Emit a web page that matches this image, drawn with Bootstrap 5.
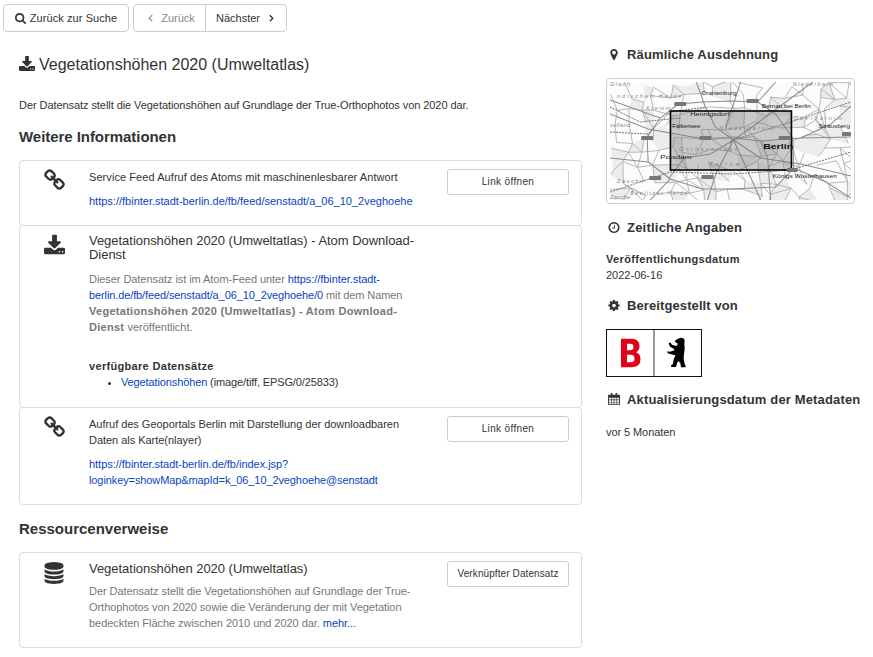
<!DOCTYPE html>
<html lang="de">
<head>
<meta charset="utf-8">
<meta name="viewport" content="width=device-width, initial-scale=1">
<title>Vegetationshöhen 2020 (Umweltatlas)</title>
<link href="https://cdn.jsdelivr.net/npm/bootstrap@5.3.0/dist/css/bootstrap.min.css" rel="stylesheet">
<style>
body{font:11px/16px "Liberation Sans",Arial,sans-serif;color:#333;background:#fff;overflow:hidden}
a{color:#0a44c0;text-decoration:none}
svg{fill:currentColor;flex:none}
.page{width:873px;height:657px}
.tools{padding:4px 0 0 3px;height:32px;gap:4px}
.tools .btn{--bs-btn-font-size:11px;--bs-btn-line-height:16px;--bs-btn-padding-y:5px;--bs-btn-padding-x:0;--bs-btn-border-radius:4px}
.btn-line{--bs-btn-color:#333;--bs-btn-bg:#fff;--bs-btn-border-color:#ccc;--bs-btn-disabled-color:#888;--bs-btn-disabled-border-color:#ccc;--bs-btn-disabled-opacity:1;white-space:nowrap}
.b-search{width:126px}
.tools .b-prev{width:73px;padding-left:4px}
.tools .b-next{width:82px;padding-right:2px}
.b-next svg{margin-left:9px}
.main-col{width:563px;margin-left:19px}
.side-col{width:260px;margin-left:24px}
.page-title{font-size:16px;line-height:20px;margin:23px 0 0;font-weight:400}
.page-title svg{margin-top:1px}
.intro{margin-top:22px;white-space:nowrap}
.sect{font-size:15px;line-height:18px;font-weight:700}
.s1{margin:15px 0 14px}
.s2{margin:15px 0 14px}
.entry{border:1px solid #ddd;border-radius:4px;padding:8px 12px 0 0}
.entry + .entry{margin-top:-1px}
.e1{height:66px}
.e2{height:183px}
.e3{height:98px}
.e4{height:96px}
.pic{width:69px;padding-left:24px}
.e4 .pic{padding-top:1px}
.body-text{width:358px;white-space:nowrap}
.entry .btn{width:122px;height:26px;--bs-btn-font-size:10px;--bs-btn-line-height:14px;--bs-btn-padding-y:4px;--bs-btn-padding-x:0;--bs-btn-border-radius:3px;letter-spacing:.35px}
.entry .b-long{letter-spacing:.1px}
.sub{font-size:13px;line-height:14px;font-weight:400;margin:0}
.e4 .sub{margin-top:1px}
.muted{color:#777}
.desc{margin-top:9px}
.e4 .desc{margin-top:7px}
.avail{margin-top:23px}
.ds{padding-left:32px;margin:0}
.side-h{font-size:13px;line-height:16px;font-weight:700;margin:15px 0;gap:5px;white-space:nowrap}
.side-h svg{width:16px;margin-top:1px}
.thumb{width:249px;height:126px;border:1px solid #ccc;border-radius:4px;padding:3px;margin-bottom:16px}
.thumb svg,.logo{display:block}
.t-search{letter-spacing:.08px}
.t-intro{letter-spacing:-.067px}
.t-s1{letter-spacing:-.05px}
.t-a1{letter-spacing:.07px}
.t-b1{letter-spacing:-.03px}
.t-b2,.t-d1{letter-spacing:-.06px}
.t-b3{letter-spacing:-.11px}
.t-b4{letter-spacing:.28px}
.t-b6{letter-spacing:.32px}
.t-b7{letter-spacing:-.12px}
.t-c1,.t-c3{letter-spacing:-.03px}
.t-c4{letter-spacing:-.1px}
.t-d2,.t-d3{letter-spacing:-.05px}
.t-e1,.t-e5{letter-spacing:.15px}
.t-e2{letter-spacing:.22px}
.t-e3{letter-spacing:.36px}
.t-e4{letter-spacing:.1px}
.t-e6{letter-spacing:-.08px}
</style>
<script src="https://cdn.jsdelivr.net/npm/bootstrap@5.3.0/dist/js/bootstrap.bundle.min.js"></script>
</head>
<body>
<svg class="d-none" xmlns="http://www.w3.org/2000/svg">
<symbol id="i-search" viewBox="0 0 1664 1664"><path d="M1152 704q0-185-131.500-316.500t-316.500-131.500-316.500 131.500-131.500 316.500 131.500 316.500 316.500 131.500 316.500-131.500 131.500-316.500zm512 832q0 52-38 90t-90 38q-54 0-90-38l-343-342q-179 124-399 124-143 0-273.500-55.500t-225-150-150-225-55.500-273.500 55.500-273.500 150-225 225-150 273.500-55.500 273.500 55.500 225 150 150 225 55.500 273.500q0 220-124 399l343 343q37 37 37 90z"/></symbol>
<symbol id="i-down" viewBox="64 0 1664 1536"><path d="M1344 1344q0-26-19-45t-45-19-45 19-19 45 19 45 45 19 45-19 19-45zm256 0q0-26-19-45t-45-19-45 19-19 45 19 45 45 19 45-19 19-45zm128-224v320q0 40-28 68t-68 28h-1472q-40 0-68-28t-28-68v-320q0-40 28-68t68-28h465l135 136q58 56 136 56t136-56l136-136h464q40 0 68 28t28 68zm-325-569q17 41-14 70l-448 448q-18 19-45 19t-45-19l-448-448q-31-29-14-70 17-39 59-39h256v-448q0-26 19-45t45-19h256q26 0 45 19t19 45v448h256q42 0 59 39z"/></symbol>
<symbol id="i-link" viewBox="64 0 1664 1664"><path d="M1520 1216q0-40-28-68l-208-208q-28-28-68-28-42 0-72 32 3 3 19 18.500t21.500 21.500 15 19 13 25.500 3.500 27.500q0 40-28 68t-68 28q-15 0-27.500-3.500t-25.500-13-19-15-21.500-21.500-18.500-19q-33 31-33 73 0 40 28 68l206 207q27 27 68 27 40 0 68-26l147-146q28-28 28-67zm-703-705q0-40-28-68l-206-207q-28-28-68-28-39 0-68 27l-147 146q-28 28-28 67 0 40 28 68l208 208q27 27 68 27 42 0 72-31-3-3-19-18.500t-21.500-21.500-15-19-13-25.500-3.500-27.500q0-40 28-68t68-28q15 0 27.500 3.500t25.500 13 19 15 21.500 21.500 18.500 19q33-31 33-73zm895 705q0 120-85 203l-147 146q-83 83-203 83-121 0-204-85l-206-207q-83-83-83-203 0-123 88-209l-88-88q-86 88-208 88-120 0-204-84l-208-208q-84-84-84-204t85-203l147-146q83-83 203-83 121 0 204 85l206 207q83 83 83 203 0 123-88 209l88 88q86-88 208-88 120 0 204 84l208 208q84 84 84 204z"/></symbol>
<symbol id="i-db" viewBox="128 0 1536 1792"><path d="M896 768q237 0 443-43t325-127v170q0 69-103 128t-280 93.500-385 34.500-385-34.500-280-93.500-103-128v-170q119 84 325 127t443 43zm0 768q237 0 443-43t325-127v170q0 69-103 128t-280 93.500-385 34.500-385-34.500-280-93.500-103-128v-170q119 84 325 127t443 43zm0-384q237 0 443-43t325-127v170q0 69-103 128t-280 93.500-385 34.500-385-34.500-280-93.500-103-128v-170q119 84 325 127t443 43zm0-1152q208 0 385 34.500t280 93.500 103 128v128q0 69-103 128t-280 93.500-385 34.500-385-34.500-280-93.500-103-128v-128q0-69 103-128t280-93.500 385-34.500z"/></symbol>
<symbol id="i-pin" viewBox="0 0 1792 1792"><path d="M1152 640q0-106-75-181t-181-75-181 75-75 181 75 181 181 75 181-75 75-181zm256 0q0 109-33 179l-364 774q-16 33-47.500 52t-67.500 19-67.500-19-46.500-52l-365-774q-33-70-33-179 0-212 150-362t362-150 362 150 150 362z"/></symbol>
<symbol id="i-clock" viewBox="0 0 1792 1792"><path d="M1024 544v448q0 14-9 23t-23 9h-320q-14 0-23-9t-9-23v-64q0-14 9-23t23-9h224v-352q0-14 9-23t23-9h64q14 0 23 9t9 23zm416 352q0-148-73-273t-198-198-273-73-273 73-198 198-73 273 73 273 198 198 273 73 273-73 198-198 73-273zm224 0q0 209-103 385.500t-279.500 279.500-385.500 103-385.500-103-279.500-279.500-103-385.500 103-385.500 279.500-279.500 385.500-103 385.500 103 279.500 279.500 103 385.500z"/></symbol>
<symbol id="i-gear" viewBox="0 0 1792 1792"><path d="M1152 896q0-106-75-181t-181-75-181 75-75 181 75 181 181 75 181-75 75-181zm512-109v222q0 12-8 23t-20 13l-185 28q-19 54-39 91 35 50 107 138 10 12 10 25t-9 23q-27 37-99 108t-94 71q-12 0-26-9l-138-108q-44 23-91 38-16 136-29 186-7 28-36 28h-222q-14 0-24.500-8.500t-11.500-21.500l-28-184q-49-16-90-37l-141 107q-10 9-25 9-14 0-25-11-126-114-165-168-7-10-7-23 0-12 8-23 15-21 51-66.500t54-70.500q-27-50-41-99l-183-27q-13-2-21-12.500t-8-23.500v-222q0-12 8-23t19-13l186-28q14-46 39-92-40-57-107-138-10-12-10-24 0-10 9-23 26-36 98.500-107.500t94.500-71.500q13 0 26 10l138 107q44-23 91-38 16-136 29-186 7-28 36-28h222q14 0 24.500 8.500t11.500 21.500l28 184q49 16 90 37l142-107q9-9 24-9 13 0 25 10 129 119 165 170 7 8 7 22 0 12-8 23-15 21-51 66.500t-54 70.500q26 50 41 98l183 28q13 2 21 12.500t8 23.500z"/></symbol>
<symbol id="i-cal" viewBox="0 0 13 14"><path fill-rule="evenodd" d="M1 2h2V.8Q3 0 4 0t1 .8V2h3V.8Q8 0 9 0t1 .8V2h2q1 0 1 1v9q0 1-1 1H1q-1 0-1-1V3q0-1 1-1zM1 5v2h2.200V5zm2.900 0v2h2.300V5zm3 0v2h2.300V5zm3 0v2H12V5zM1 7.700v2h2.200v-2zm2.900 0v2h2.300v-2zm3 0v2h2.300v-2zm3 0v2H12v-2zM1 10.300V12h2.200v-1.700zm2.900 0V12h2.300v-1.700zm3 0V12h2.300v-1.700zm3 0V12H12v-1.700z"/></symbol>
</svg>
<div class="page">
  <div class="tools d-flex">
    <button class="btn btn-line b-search d-flex justify-content-center align-items-center gap-1"><svg width="11" height="11"><use href="#i-search"/></svg><span class="t-search">Zurück zur Suche</span></button>
    <div class="btn-group">
      <button class="btn btn-line b-prev d-flex justify-content-center align-items-center" disabled><svg class="me-2" width="5" height="8" viewBox="0 0 5 8"><path d="M4.200 1.200 1.200 4.200l3 3" fill="none" stroke="currentColor" stroke-width="1.200"/></svg><span class="t-prev">Zurück</span></button>
      <button class="btn btn-line b-next d-flex justify-content-center align-items-center"><span class="t-next">Nächster</span><svg width="5" height="8" viewBox="0 0 5 8"><path d="M.8 1.200l3 3-3 3" fill="none" stroke="currentColor" stroke-width="1.300"/></svg></button>
    </div>
  </div>
  <div class="d-flex">
    <main class="main-col">
      <h1 class="page-title d-flex"><svg class="me-1" width="16" height="15"><use href="#i-down"/></svg><span class="t-title">Vegetationshöhen 2020 (Umweltatlas)</span></h1>
      <p class="intro mb-0"><span class="t-intro">Der Datensatz stellt die Vegetationshöhen auf Grundlage der True-Orthophotos von 2020 dar.</span></p>
      <h2 class="sect s1"><span class="t-s1">Weitere Informationen</span></h2>
      <section>
        <article class="entry e1 d-flex align-items-start">
          <div class="pic"><svg width="21" height="21"><use href="#i-link"/></svg></div>
          <div class="body-text"><div><span class="t-a1">Service Feed Aufruf des Atoms mit maschinenlesbarer Antwort</span></div><a class="d-block mt-2" href="#"><span class="t-a2">https://fbinter.stadt-berlin.de/fb/feed/senstadt/a_06_10_2veghoehe</span></a></div>
          <button class="btn btn-line">Link öffnen</button>
        </article>
        <article class="entry e2 d-flex align-items-start">
          <div class="pic"><svg width="21" height="21"><use href="#i-down"/></svg></div>
          <div class="body-text">
            <h3 class="sub"><span class="t-b1">Vegetationshöhen 2020 (Umweltatlas) - Atom Download-</span><br><span class="t-b1">Dienst</span></h3>
            <p class="muted mb-0 desc"><span class="t-b2">Dieser Datensatz ist im Atom-Feed unter <a href="#">https://fbinter.stadt-</a></span><br><span class="t-b3"><a href="#">berlin.de/fb/feed/senstadt/a_06_10_2veghoehe/0</a> mit dem Namen</span><br><b class="t-b4">Vegetationshöhen 2020 (Umweltatlas) - Atom Download-</b><br><b class="t-b4">Dienst</b> <span class="t-b5">veröffentlicht.</span></p>
            <div class="avail"><b class="t-b6">verfügbare Datensätze</b></div>
            <ul class="ds"><li><span class="t-b7"><a href="#">Vegetationshöhen</a> (image/tiff, EPSG/0/25833)</span></li></ul>
          </div>
        </article>
        <article class="entry e3 d-flex align-items-start">
          <div class="pic"><svg width="21" height="21"><use href="#i-link"/></svg></div>
          <div class="body-text"><div><span class="t-c1">Aufruf des Geoportals Berlin mit Darstellung der downloadbaren</span><br><span class="t-c1">Daten als Karte(nlayer)</span></div><a class="d-block mt-2" href="#"><span class="t-c3">https://fbinter.stadt-berlin.de/fb/index.jsp?</span><br><span class="t-c4">loginkey=showMap&amp;mapId=k_06_10_2veghoehe@senstadt</span></a></div>
          <button class="btn btn-line">Link öffnen</button>
        </article>
      </section>
      <h2 class="sect s2"><span class="t-s2">Ressourcenverweise</span></h2>
      <article class="entry e4 d-flex align-items-start">
        <div class="pic"><svg width="20" height="22" ><use href="#i-db"/></svg></div>
        <div class="body-text">
          <h3 class="sub"><span class="t-b1">Vegetationshöhen 2020 (Umweltatlas)</span></h3>
          <p class="muted mb-0 desc"><span class="t-d1">Der Datensatz stellt die Vegetationshöhen auf Grundlage der True-</span><br><span class="t-d2">Orthophotos von 2020 sowie die Veränderung der mit Vegetation</span><br><span class="t-d3">bedeckten Fläche zwischen 2010 und 2020 dar. <a href="#">mehr...</a></span></p>
        </div>
        <button class="btn btn-line b-long">Verknüpfter Datensatz</button>
      </article>
    </main>
    <aside class="side-col">
      <h2 class="side-h d-flex"><svg height="13"><use href="#i-pin"/></svg><span class="t-e1">Räumliche Ausdehnung</span></h2>
      <div class="thumb">
        <svg id="map" width="241" height="118" viewBox="0 0 240 118" preserveAspectRatio="none" font-family="Liberation Sans">
          <rect width="240" height="118" fill="#fcfcfc"/>
          <g id="woods" fill="#ececec"></g>
          <g id="lanes" fill="none" stroke="#b0b0b0" stroke-width=".9"></g>
          <g fill="none" stroke="#8c8c8c" stroke-width="1">
            <path d="M0 32 38 47 60 51 88 56 123 56 150 59 190 56 240 55M38 80 37 55 50 36 68 22 92 20 120 19 147 20 165 32 182 56 183 86 165 105 120 107 92 107 60 97zM86 0 95 25 105 45 123 58 135 84 150 118M123 58 143 44 175 20 202 0M0 76 38 80 60 97 40 118M130 0 123 22 115 45M123 58 150 76 190 82 240 94M123 58 100 72 74 76 58 97M183 86 215 100 240 116M97 118 106 90 123 58M150 59 157 76 160 118M0 18 50 36M147 20 165 0M190 56 220 42 240 24"/>
          </g>
          <path d="M0 50 38 52 60 30 95 25M0 25 30 40 70 36M0 110 60 90 123 92 180 88 240 70M123 58 180 40 240 20" fill="none" stroke="#666" stroke-width=".9" stroke-dasharray="2 1"/>
          <rect x="60.200" y="29" width="120.500" height="59" fill="#777" fill-opacity=".38" stroke="#000" stroke-width="1.600"/>
          <g fill="#777"><rect x="64" y="20" width="12" height="4" rx="1"/><rect x="136" y="17" width="12" height="4" rx="1"/><rect x="31" y="54" width="12" height="4" rx="1"/><rect x="89" y="54" width="12" height="4" rx="1"/><rect x="168" y="54" width="12" height="4" rx="1"/><rect x="39" y="94" width="12" height="4" rx="1"/><rect x="91" y="93" width="12" height="4" rx="1"/><rect x="176" y="86" width="11" height="4" rx="1"/><rect x="231" y="50" width="9" height="4" rx="1"/></g>
          <g fill="#858585" font-size="5.500" font-style="italic"><text x="0" y="4" textLength="20">Glach</text><text x="7" y="16" textLength="64">ndischen Heide</text><text x="36" y="28" textLength="24">Kremm</text><text x="0" y="45" textLength="20">velland</text><text x="183" y="38" textLength="48">Oberbarnim</text><text x="109" y="48" textLength="55">Niederbarnim</text><text x="69" y="69" textLength="58">Osthavelland</text><text x="99" y="84" textLength="30">Teltow</text><text x="7" y="101" textLength="26">Zauche</text><text x="20" y="113" textLength="57">Beelitzer Heide</text><text x="182" y="4" textLength="40">Niederbarn</text><text x="0" y="117" textLength="20">Zauche</text></g>
          <g fill="#222" font-size="5.500"><text x="91" y="13" textLength="35" lengthAdjust="spacingAndGlyphs">Oranienburg</text><text x="151" y="26" textLength="49" lengthAdjust="spacingAndGlyphs">Bernau bei Berlin</text><text x="80" y="34.500" textLength="39" lengthAdjust="spacingAndGlyphs">Hennigsdorf</text><text x="62" y="46.500" textLength="28" lengthAdjust="spacingAndGlyphs">Falkensee</text><text x="208" y="46" textLength="31" lengthAdjust="spacingAndGlyphs">Strausberg</text><text x="50" y="77.500" font-size="6" textLength="31" lengthAdjust="spacingAndGlyphs">Potsdam</text><text x="162" y="96" textLength="64" lengthAdjust="spacingAndGlyphs">Königs Wusterhausen</text><text x="152.500" y="67" font-size="7.500" font-weight="700" fill="#111" textLength="30" lengthAdjust="spacingAndGlyphs">Berlin</text></g>
        </svg>
      </div>
      <h2 class="side-h d-flex"><svg height="13"><use href="#i-clock"/></svg><span class="t-e2">Zeitliche Angaben</span></h2>
      <div class="text-nowrap"><b class="t-e3">Veröffentlichungsdatum</b><br>2022-06-16</div>
      <h2 class="side-h d-flex"><svg height="13"><use href="#i-gear"/></svg><span class="t-e4">Bereitgestellt von</span></h2>
      <svg class="logo" width="96" height="48" viewBox="0 0 96 48"><rect x=".5" y=".5" width="95" height="47" fill="#fff" stroke="#111"/><path d="M48 1v46" stroke="#333"/><path fill="#e2001a" fill-rule="evenodd" d="M15 9.700h10.500q8 0 8 7.500 0 4.200-3.500 6 4.500 1.700 4.500 6.700 0 8.300-9 8.300H15zm6 5v6.500H24q3.500 0 3.500-3.300T24 14.700zm0 11v7.500h3.700q3.800 0 3.800-3.800t-3.800-3.700z"/><path fill="#000" transform="translate(44 -1) scale(.3333)" d="M75 38 82 33 92 29 100 31 104 36 103 46 104 62 102 78 101 92 104 108 107 113 106 118H93L91 106 85 99 81 106 78 117H64L63 112 69 108 71 94 76 82 63 79 53 76 52 70 60 71 74 67 71 62 61 57 57 50 56 44 62 44 66 50 79 54 84 47 76 43z"/></svg>
      <h2 class="side-h d-flex mb-0"><svg height="13"><use href="#i-cal"/></svg><span class="t-e5">Aktualisierungsdatum der Metadaten</span></h2>
      <div class="mt-3"><span class="t-e6">vor 5 Monaten</span></div>
    </aside>
  </div>
</div>
<script>
// Minor roads and woodland: a jittered mesh with a fixed seed
(function(){
  var s=7,r=function(){s=(s*16807)%2147483647;return s/2147483647},n=[],x,y,d='',w='';
  for(y=0;y<10;y++){n[y]=[];for(x=0;x<18;x++)n[y][x]=[x*14.5-4+r()*12,y*13.5-3+r()*11]}
  for(y=0;y<9;y++)for(x=0;x<17;x++){
    var p=n[y][x];
    if(r()<.62)d+='M'+p+'L'+n[y][x+1];
    if(r()<.62)d+='M'+p+'L'+n[y+1][x];
    if(r()<.25)d+='M'+p+'L'+n[y+1][x+1];
    if(r()<.28)w+='M'+p+'L'+n[y][x+1]+'L'+n[y+1][x+1]+'L'+n[y+1][x]+'Z';
  }
  document.getElementById('lanes').innerHTML='<path d="'+d+'"/>';
  document.getElementById('woods').innerHTML='<path d="'+w+'"/>';
})();
</script>
</body>
</html>
